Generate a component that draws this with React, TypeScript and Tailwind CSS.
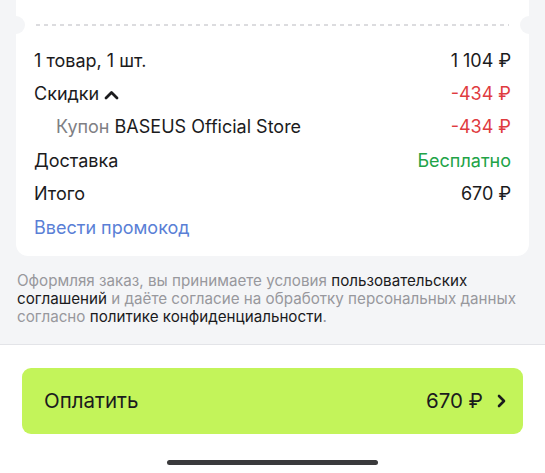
import React from "react";

const Row = ({ left, right, rightClass = "text-[#1b1b1d]" }: { left: React.ReactNode; right?: React.ReactNode; rightClass?: string }) => (
  <div className="flex items-center justify-between h-[33.4px]">
    <div className="flex items-center">{left}</div>
    {right !== undefined && <div className={rightClass}>{right}</div>}
  </div>
);

export default function App() {
  return (
    <div
      className="w-[545px] h-[473px] overflow-hidden bg-[#f4f5f7] flex flex-col text-[#1b1b1d]"
      style={{ fontFamily: "Inter, 'Noto Sans', sans-serif" }}
    >
      <div className="px-4">
        <div className="bg-white rounded-b-[12px] relative pt-[24px] pb-[12px]">
          <div className="relative h-[2px] mx-[20px] bg-[repeating-linear-gradient(to_right,#dcdcdf_0px,#dcdcdf_4px,transparent_4px,transparent_8px)]" />
          <div className="absolute left-[-9px] top-[16px] w-[18px] h-[18px] rounded-full bg-[#f4f5f7]" />
          <div className="absolute right-[-9px] top-[16px] w-[18px] h-[18px] rounded-full bg-[#f4f5f7]" />
          <div className="px-[18px] pt-[18px] text-[18px] leading-[22px]">
            <Row left="1 товар, 1 шт." right="1 104 ₽" />
            <Row
              left={
                <>
                  <span>Скидки</span>
                  <svg width="15" height="10" viewBox="0 0 15 10" className="ml-[5px] mt-[1px]">
                    <polyline points="2,8 7.5,2.5 13,8" fill="none" stroke="#1b1b1d" strokeWidth="2.8" strokeLinecap="round" strokeLinejoin="round" />
                  </svg>
                </>
              }
              right="-434 ₽"
              rightClass="text-[#df3b3f]"
            />
            <Row
              left={
                <span className="pl-[22px]">
                  <span className="text-[#7f7f84]">Купон</span> BASEUS Official Store
                </span>
              }
              right="-434 ₽"
              rightClass="text-[#df3b3f]"
            />
            <Row left="Доставка" right="Бесплатно" rightClass="text-[#21a347]" />
            <Row left="Итого" right="670 ₽" />
            <Row left={<span className="text-[#5a7fd6]">Ввести промокод</span>} />
          </div>
        </div>
      </div>

      <div className="pl-[17px] pt-[16px] pr-[24px] text-[15.2px] leading-[18px] text-[#98989d] h-[88px]">
        Оформляя заказ, вы принимаете условия <span className="text-[#1b1b1d]">пользовательских соглашений</span> и даёте согласие на обработку персональных данных согласно <span className="text-[#1b1b1d]">политике конфиденциальности</span>.
      </div>

      <div className="flex-1 bg-white border-t border-[#e3e4e8] flex flex-col">
        <div className="mx-[22px] mt-[23px] h-[66px] rounded-[9px] bg-[#c3f45a] flex items-center justify-between pl-[22px] pr-[17px] text-[20.5px]">
          <span>Оплатить</span>
          <div className="flex items-center">
            <span>670 ₽</span>
            <svg width="9" height="14" viewBox="0 0 9 14" className="ml-[14px]">
              <polyline points="2,2 7,7 2,12" fill="none" stroke="#1b1b1d" strokeWidth="2.6" strokeLinecap="round" strokeLinejoin="round" />
            </svg>
          </div>
        </div>
        <div className="mt-[26px] mx-auto w-[211px] h-[5px] rounded-full bg-[#3a3a3c]" />
      </div>
    </div>
  );
}
